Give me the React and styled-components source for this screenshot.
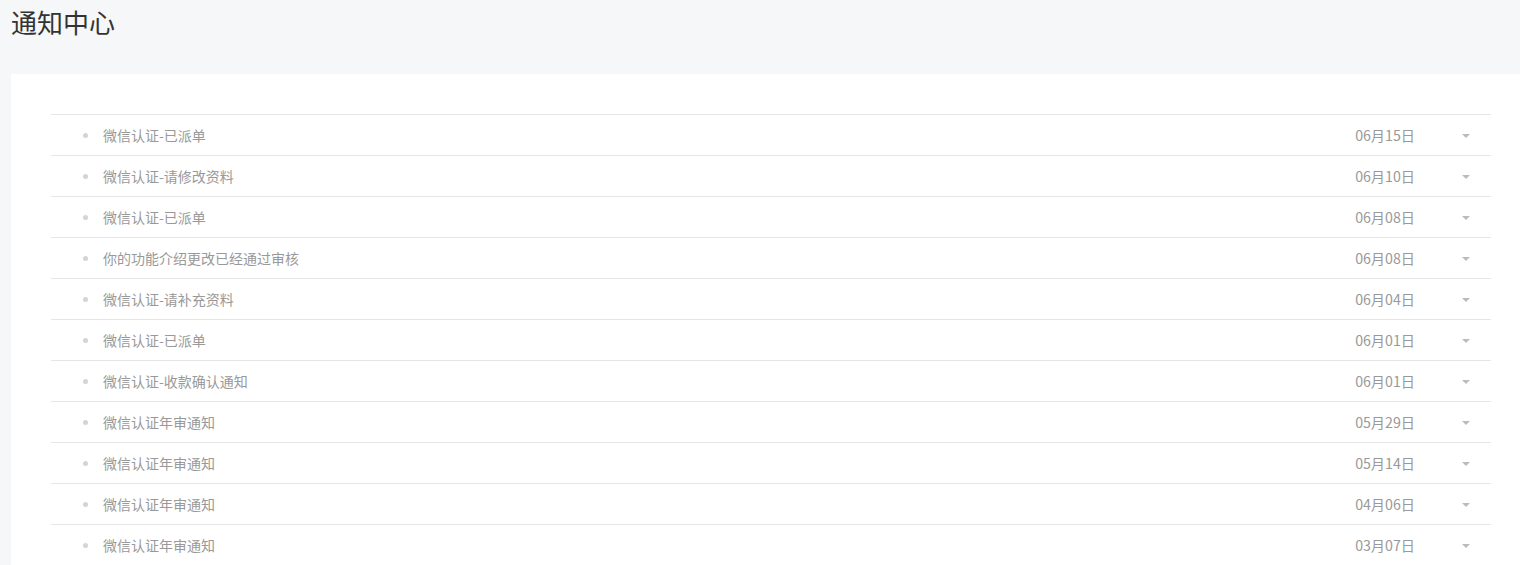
import React from 'react';
import styled, { createGlobalStyle } from 'styled-components';

const GlobalStyle = createGlobalStyle`
  html, body {
    margin: 0;
    padding: 0;
    background: #f6f7f9;
    font-family: "Microsoft YaHei", "Noto Sans CJK SC", "Liberation Sans", sans-serif;
  }
`;

const Page = styled.div`
  display: flex;
  flex-direction: column;
  min-height: 565px;
`;

const Title = styled.h1`
  margin: 0;
  padding: 4px 11px 0;
  height: 74px;
  box-sizing: border-box;
  font-size: 26px;
  font-weight: 400;
  line-height: 36px;
  color: #333;
`;

const Panel = styled.div`
  margin-left: 11px;
  background: #fff;
  padding: 40px 29px 40px 40px;
  flex: 1;
`;

const List = styled.ul`
  list-style: none;
  margin: 0;
  padding: 0;
  border-top: 1px solid #e6e6e6;
`;

const Row = styled.li`
  display: flex;
  align-items: center;
  height: 40px;
  border-bottom: 1px solid #e6e6e6;
  font-size: 14px;
  color: #999;
`;

const Dot = styled.span`
  width: 5px;
  height: 5px;
  border-radius: 50%;
  background: #d4d4d4;
  margin: 0 15px 0 32px;
`;

const Subject = styled.span`
  flex: 1;
`;

const Date = styled.span`
  font-size: 14.2px;
`;

const Caret = styled.span`
  width: 0;
  height: 0;
  border-left: 4px solid transparent;
  border-right: 4px solid transparent;
  border-top: 4px solid #bbb;
  margin: 1px 21px 0 47px;
`;

const items = [
  { id: 1, title: '微信认证-已派单', date: '06月15日' },
  { id: 2, title: '微信认证-请修改资料', date: '06月10日' },
  { id: 3, title: '微信认证-已派单', date: '06月08日' },
  { id: 4, title: '你的功能介绍更改已经通过审核', date: '06月08日' },
  { id: 5, title: '微信认证-请补充资料', date: '06月04日' },
  { id: 6, title: '微信认证-已派单', date: '06月01日' },
  { id: 7, title: '微信认证-收款确认通知', date: '06月01日' },
  { id: 8, title: '微信认证年审通知', date: '05月29日' },
  { id: 9, title: '微信认证年审通知', date: '05月14日' },
  { id: 10, title: '微信认证年审通知', date: '04月06日' },
  { id: 11, title: '微信认证年审通知', date: '03月07日' },
];

const App = () => (
  <Page>
    <GlobalStyle />
    <Title>通知中心</Title>
    <Panel>
      <List>
        {items.map(item => (
          <Row key={item.id}>
            <Dot />
            <Subject>{item.title}</Subject>
            <Date>{item.date}</Date>
            <Caret />
          </Row>
        ))}
      </List>
    </Panel>
  </Page>
);

export default App;
